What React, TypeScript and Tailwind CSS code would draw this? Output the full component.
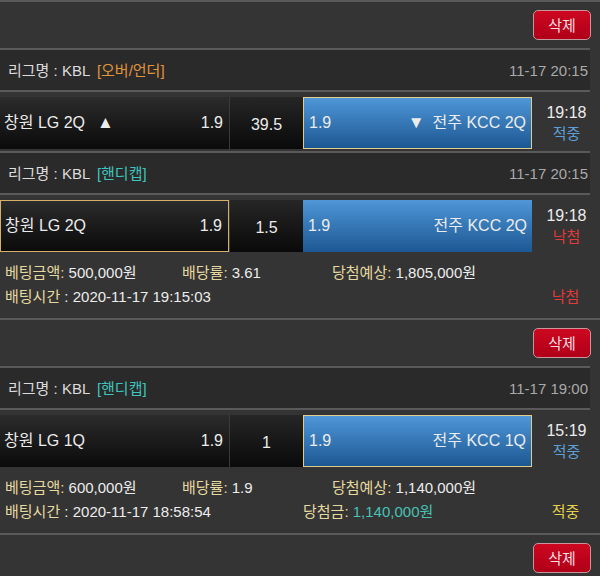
import React from "react";

type Side = "left" | "right";

type Bet = {
    kind: string;
    kindColor: string;
    date: string;
    home: string;
    away: string;
    homeOdds: string;
    line: string;
    awayOdds: string;
    pick: Side;
    arrows?: boolean;
    time: string;
    result: "적중" | "낙첨";
    info?: {
        amount: string;
        rate: string;
        expect: string;
        betTime: string;
        prize?: string;
    };
};

const bets: Bet[] = [
    {
        kind: "[오버/언더]",
        kindColor: "text-[#e0953a]",
        date: "11-17 20:15",
        home: "창원 LG 2Q",
        away: "전주 KCC 2Q",
        homeOdds: "1.9",
        line: "39.5",
        awayOdds: "1.9",
        pick: "right",
        arrows: true,
        time: "19:18",
        result: "적중",
    },
    {
        kind: "[핸디캡]",
        kindColor: "text-[#3ec4bd]",
        date: "11-17 20:15",
        home: "창원 LG 2Q",
        away: "전주 KCC 2Q",
        homeOdds: "1.9",
        line: "1.5",
        awayOdds: "1.9",
        pick: "left",
        time: "19:18",
        result: "낙첨",
        info: {
            amount: "500,000원",
            rate: "3.61",
            expect: "1,805,000원",
            betTime: "2020-11-17 19:15:03",
        },
    },
];

const bets2: Bet[] = [
    {
        kind: "[핸디캡]",
        kindColor: "text-[#3ec4bd]",
        date: "11-17 19:00",
        home: "창원 LG 1Q",
        away: "전주 KCC 1Q",
        homeOdds: "1.9",
        line: "1",
        awayOdds: "1.9",
        pick: "right",
        time: "15:19",
        result: "적중",
        info: {
            amount: "600,000원",
            rate: "1.9",
            expect: "1,140,000원",
            betTime: "2020-11-17 18:58:54",
            prize: "1,140,000원",
        },
    },
];

const DeleteBar = () => (
    <div className="h-[46px] border-t-2 border-[#5a5a5a] flex items-center justify-end pr-[9px] box-content">
        <button className="w-[58px] h-[30px] rounded-[5px] border border-[#c9959d] bg-gradient-to-b from-[#cc0820] to-[#b00018] text-[#f6dde0] text-[15px] leading-none">
            삭제
        </button>
    </div>
);

const BetItem = ({ bet }: { bet: Bet }) => {
    const leftSel = bet.pick === "left";
    const rightSel = bet.pick === "right";
    return (
        <div>
            <div className="mr-[10px] h-[2px] bg-[#5a5a5a]" />
            <div className="mr-[10px] h-[40px] bg-[#2a2a2a] flex items-center justify-between pl-[8px] pr-[2px] pt-[3px]">
                <div className="text-[#dcdcdc] text-[15px]">
                    리그명 : KBL <span className={`${bet.kindColor} ml-[3px]`}>{bet.kind}</span>
                </div>
                <div className="text-[#a9a9a9] text-[15px]">{bet.date}</div>
            </div>
            <div className="mr-[10px] h-[2px] bg-[#5a5a5a]" />
            <div className="flex pt-[5px] pb-[2px] text-[16px] text-[#ececec]">
                <div
                    className={`w-[229px] h-[52px] flex items-center justify-between pl-[4px] pr-[6px] bg-gradient-to-b from-[#2c2c2c] to-[#0b0b0b] ${
                        leftSel ? "border border-[#d6b06a]" : ""
                    }`}
                >
                    <span className="flex items-center">
                        {bet.home}
                        {bet.arrows && <span className="ml-[12px] text-[17px]">▲</span>}
                    </span>
                    <span>{bet.homeOdds}</span>
                </div>
                <div className="w-[74px] h-[52px] flex items-center justify-center border-l border-[#3a3a3a] bg-gradient-to-b from-[#262626] to-[#0a0a0a] pt-[4px]">
                    {bet.line}
                </div>
                <div
                    className={`w-[229px] h-[52px] flex items-center justify-between pl-[5px] pr-[5px] bg-gradient-to-b from-[#4f97d8] to-[#1c5893] ${
                        rightSel ? "border border-[#e2cc8c]" : ""
                    }`}
                >
                    <span>{bet.awayOdds}</span>
                    <span className="flex items-center">
                        {bet.arrows && <span className="mr-[8px] text-[17px]">▼</span>}
                        {bet.away}
                    </span>
                </div>
                <div className="flex-1 flex flex-col items-center justify-center leading-[21px] pl-[1px]">
                    <span className="text-[#ececec]">{bet.time}</span>
                    <span className={`text-[15px] ${bet.result === "적중" ? "text-[#5d9fd9]" : "text-[#e03a3a]"}`}>{bet.result}</span>
                </div>
            </div>
            {bet.info && (
                <div className="h-[64px] pt-[7px] pl-[5px] text-[15px] leading-[24px] text-[#ececec]">
                    <div className="flex">
                        <span className="w-[177px]">
                            <span className="text-[#e6d9a0]">베팅금액:</span> {bet.info.amount}
                        </span>
                        <span className="w-[150px]">
                            <span className="text-[#e6d9a0]">배당률:</span> {bet.info.rate}
                        </span>
                        <span>
                            <span className="text-[#e6d9a0]">당첨예상:</span> {bet.info.expect}
                        </span>
                    </div>
                    <div className="flex">
                        <span className="w-[298px]">
                            <span className="text-[#e6d9a0]">배팅시간</span> : {bet.info.betTime}
                        </span>
                        <span className="flex-1">
                            {bet.info.prize && (
                                <>
                                    <span className="text-[#e6d9a0]">당첨금:</span> <span className="text-[#47c2b5]">{bet.info.prize}</span>
                                </>
                            )}
                        </span>
                        <span className={`w-[69px] text-center ${bet.result === "적중" ? "text-[#e6d24a]" : "text-[#e03a3a]"}`}>{bet.result}</span>
                    </div>
                </div>
            )}
        </div>
    );
};

export default function App() {
    return (
        <div className="w-[600px] h-[576px] overflow-hidden bg-[#343434] font-['Liberation_Sans','Noto_Sans_CJK_KR',sans-serif]">
            <DeleteBar />
            {bets.map((b, i) => (
                <BetItem key={i} bet={b} />
            ))}
            <DeleteBar />
            {bets2.map((b, i) => (
                <BetItem key={i} bet={b} />
            ))}
            <DeleteBar />
        </div>
    );
}
